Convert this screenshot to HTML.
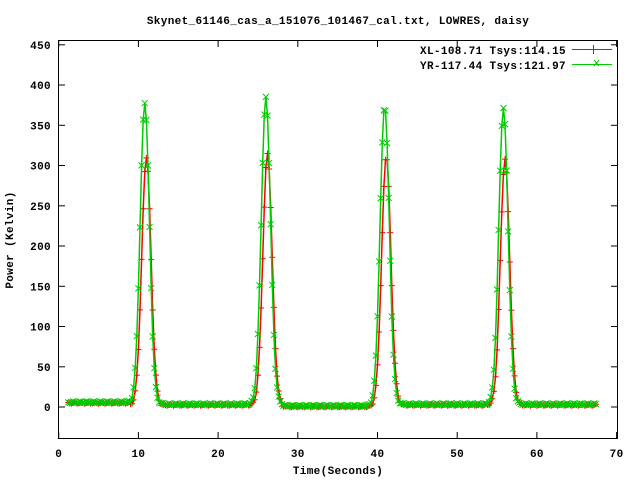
<!DOCTYPE html><html><head><style>body{margin:0;background:#fff}svg{display:block}text{font-family:"Liberation Mono",monospace;font-weight:bold;font-size:11px;letter-spacing:0.35px;fill:#000}</style></head><body>
<svg id="s" width="640" height="480" xmlns="http://www.w3.org/2000/svg">
<text x="338" y="24" text-anchor="middle">Skynet_61146_cas_a_151076_101467_cal.txt, LOWRES, daisy</text>
<rect x="58.5" y="40.5" width="559" height="398" fill="none" stroke="#000"/>
<g id="ax"></g>
<text x="566" y="54" text-anchor="end">XL-108.71 Tsys:114.15</text>
<text x="566" y="69" text-anchor="end">YR-117.44 Tsys:121.97</text>
<line x1="572" y1="49.5" x2="612" y2="49.5" stroke="#f00"/><line x1="593.5" y1="45" x2="593.5" y2="54" stroke="#f00"/>
<line x1="572" y1="64.5" x2="612" y2="64.5" stroke="#0c0"/><path d="M594 60l5 6M599 60l-5 6" stroke="#0c0"/>
<text x="338" y="474" text-anchor="middle">Time(Seconds)</text>
<text transform="translate(13,240) rotate(-90)" text-anchor="middle">Power (Kelvin)</text>
<g id="d"></g>
</svg>
<script>
var X=t=>58.7+7.97*t,Y=v=>407-v*0.805,ax=document.getElementById('ax'),h='';
for(var i=0;i<=70;i+=10){var x=X(i).toFixed(1);h+=`<line x1="${x}" y1="438" x2="${x}" y2="432" stroke="#000"/><line x1="${x}" y1="41" x2="${x}" y2="47" stroke="#000"/><text x="${x}" y="457" text-anchor="middle">${i}</text>`}
for(var v=-50;v<=450;v+=50){var y=Y(v).toFixed(1);if(v>-50)h+=`<line x1="59" y1="${y}" x2="65" y2="${y}" stroke="#000"/><line x1="617" y1="${y}" x2="611" y2="${y}" stroke="#000"/><text x="51" y="${(+y+4)}" text-anchor="end">${v}</text>`}
ax.innerHTML=h;
var P=[[10.9,308,375],[26.1,312,381],[41.0,312,373],[55.9,305,368]];
function f(t,k){var s=t<9?5:(t<42&&t>28?0.5:2.5);s+=(k?1:0)+Math.sin(t*7.3+k)*1;P.forEach(p=>{s+=p[k?2:1]*Math.exp(-(t-p[0]-(k?-0.1:0.1))*(t-p[0]-(k?-0.1:0.1))/(2*0.58*0.58))});return s}
var g='';[1,2].forEach(k=>{var c=k==1?'#f00':'#0c0',pts=[],m='';for(var t=1.2;t<=67.5;t+=0.2){var x=X(t),y=Y(f(t,k-1));pts.push(x.toFixed(1)+','+y.toFixed(1));m+=k==1?`M${x-3} ${y}h6M${x} ${y-3}v6`:`M${x-3} ${y-3}l6 6M${x+3} ${y-3}l-6 6`}
g+=`<polyline points="${pts.join(' ')}" fill="none" stroke="${c}" stroke-width="1.5"/><path d="${m}" stroke="${c}" fill="none"/>`});
document.getElementById('d').innerHTML=g;
</script></body></html>
